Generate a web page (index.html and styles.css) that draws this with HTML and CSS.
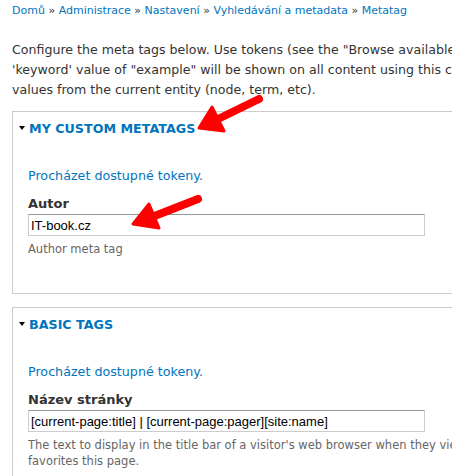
FILE: index.html
```html
<!DOCTYPE html>
<html lang="cs">
<head>
    <meta charset="UTF-8">
    <meta name="viewport" content="width=device-width, initial-scale=1.0">
    <title>Metatag</title>
    <link rel="stylesheet" href="styles.css">
</head>
<body>
    <div class="page">
        <div class="breadcrumb">
            <a href="#">Domů</a> » <a href="#">Administrace</a> » <a href="#">Nastavení</a> » <a href="#">Vyhledávání a metadata</a> » <a href="#">Metatag</a>
        </div>

        <p class="intro">
            <span>Configure the meta tags below. Use tokens (see the "Browse available tokens" popup) to avoid redundant meta data and search engine penalization. For example, a</span>
            <span>'keyword' value of "example" will be shown on all content using this configuration, whereas using the [node:field_keywords] automatically inserts the "keywords"</span>
            <span>values from the current entity (node, term, etc).</span>
        </p>

        <div class="fieldset">
            <div class="legend"><span class="arrow-down"></span><a href="#">My custom metatags</a></div>
            <a class="token-link" href="#">Procházet dostupné tokeny.</a>
            <div class="form-item">
                <label>Autor</label>
                <input type="text" value="IT-book.cz">
                <div class="description">Author meta tag</div>
            </div>
        </div>

        <div class="fieldset">
            <div class="legend"><span class="arrow-down"></span><a href="#">Basic tags</a></div>
            <a class="token-link" href="#">Procházet dostupné tokeny.</a>
            <div class="form-item">
                <label>Název stránky</label>
                <input type="text" value="[current-page:title] | [current-page:pager][site:name]">
                <div class="description">
                    <span>The text to display in the title bar of a visitor's web browser when they view this page. This meta tag may also be used as the title of the page when a visitor bookmarks or</span>
                    <span>favorites this page.</span>
                </div>
            </div>
        </div>
    </div>

    <!-- red arrows drawn over the screenshot -->
    <svg class="marks" width="452" height="476" viewBox="0 0 452 476">
        <line x1="259" y1="99" x2="216" y2="120" stroke="#f00" stroke-width="8" stroke-linecap="round"/>
        <polygon points="199,128 224,131 212,107" fill="#f00" stroke="#f00" stroke-width="3" stroke-linejoin="round"/>
        <line x1="198" y1="199" x2="152" y2="217" stroke="#f00" stroke-width="8" stroke-linecap="round"/>
        <polygon points="133,224 159,228 149,204" fill="#f00" stroke="#f00" stroke-width="3" stroke-linejoin="round"/>
    </svg>
</body>
</html>
```

FILE: styles.css
```css
body {
    margin: 0;
    background: #fff;
    color: #333;
    font-family: "DejaVu Sans", Verdana, sans-serif;
    overflow: hidden;
    position: relative;
    height: 476px;
}

a {
    color: #0074bd;
    text-decoration: none;
}

.page {
    padding-left: 12px;
    width: 470px;
}

.breadcrumb {
    padding-top: 4px;
    font-size: 11px;
    line-height: 14px;
    color: #333;
    white-space: nowrap;
}

.intro {
    margin: 22px 0 0;
    font-size: 12.6px;
    line-height: 20px;
    white-space: nowrap;
    overflow: hidden;
}

.intro span,
.description span {
    display: block;
}

.fieldset {
    margin-top: 11px;
    border: 1px solid #ccc;
    padding: 8px 0 36px 15px;
}

.fieldset + .fieldset {
    margin-top: 13px;
}

.legend {
    display: flex;
    align-items: center;
    height: 16px;
    font-size: 12.7px;
    font-weight: bold;
    text-transform: uppercase;
}

.arrow-down {
    width: 0;
    height: 0;
    margin: 0 4px 0 -9px;
    border-left: 3.5px solid transparent;
    border-right: 3.5px solid transparent;
    border-top: 4px solid #000;
}

.token-link {
    display: block;
    margin-top: 31px;
    font-size: 12.7px;
    line-height: 18px;
}

.form-item {
    margin-top: 11px;
}

.form-item label {
    display: block;
    font-size: 13px;
    font-weight: bold;
    line-height: 16px;
    color: #333;
}

.form-item input {
    display: block;
    box-sizing: border-box;
    margin-top: 2px;
    width: 397px;
    height: 22px;
    padding: 0 2px;
    border: 1px solid #ccc;
    border-top-color: #999;
    font-family: "Liberation Sans", Arial, sans-serif;
    font-size: 13px;
    color: #000;
}

.description {
    margin-top: 5px;
    font-size: 11.5px;
    line-height: 16px;
    color: #666;
    white-space: nowrap;
    overflow: hidden;
}

.marks {
    position: absolute;
    left: 0;
    top: 0;
    pointer-events: none;
}
```
